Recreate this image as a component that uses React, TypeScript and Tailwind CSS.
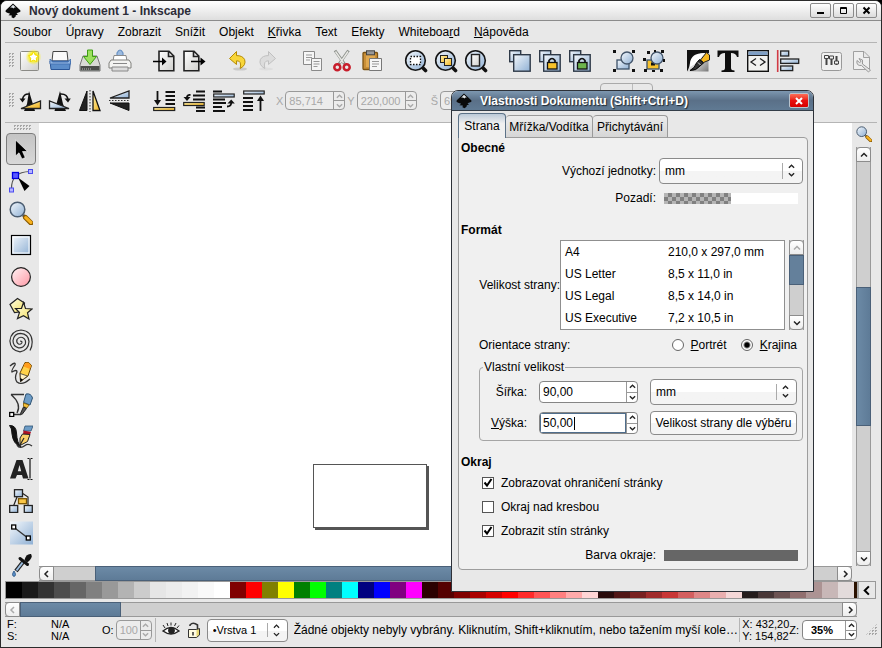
import type { ReactNode } from "react";
import clsx from "clsx";

const Defs = () => (
  <svg width="0" height="0" className="absolute" aria-hidden="true">
    <defs>
      <linearGradient id="blue" x1="0" y1="0" x2="1" y2="1">
        <stop offset="0" stopColor="#f4f8fc" />
        <stop offset="1" stopColor="#8fb0d4" />
      </linearGradient>
      <linearGradient id="pink" x1="0" y1="0" x2="1" y2="1">
        <stop offset="0" stopColor="#fff4f5" />
        <stop offset="1" stopColor="#ff97a4" />
      </linearGradient>
      <linearGradient id="gold" x1="0" y1="0" x2="1" y2="1">
        <stop offset="0" stopColor="#fff3b0" />
        <stop offset="1" stopColor="#f2b21c" />
      </linearGradient>
      <linearGradient id="pale" x1="0" y1="0" x2="1" y2="1">
        <stop offset="0" stopColor="#ffffe8" />
        <stop offset="1" stopColor="#f5e060" />
      </linearGradient>
      <linearGradient id="paper" x1="0" y1="0" x2="1" y2="1">
        <stop offset="0" stopColor="#ffffff" />
        <stop offset="1" stopColor="#cfcfcc" />
      </linearGradient>
      <linearGradient id="ink" x1="0" y1="0" x2="1" y2="1">
        <stop offset="0.3" stopColor="#ffffff" />
        <stop offset="1" stopColor="#777777" />
      </linearGradient>
      <radialGradient id="glow">
        <stop offset="0.4" stopColor="#fff200" />
        <stop offset="1" stopColor="#fff200" stopOpacity="0" />
      </radialGradient>
    </defs>
  </svg>
);

const Svg = ({ children, size = 24 }: { children: ReactNode; size?: number }) => (
  <svg width={size} height={size} viewBox="0 0 24 24" fill="none" aria-hidden="true">
    {children}
  </svg>
);

const Logo = () => (
  <svg width="16" height="16" viewBox="0 0 16 16" aria-hidden="true">
    <path
      d="M8 0.5 L15 7 Q16.5 9 13.5 9.5 L11.5 10.3 L13 11.5 L10.8 12.3 L10.5 13.8 L8.5 15.2 L6.5 14.2 L6.8 12.6 L3.4 12.2 L5.2 10.8 L2.2 9.7 Q-0.5 9 1 7 Z"
      fill="#0a0a0a"
    />
    <path d="M8 1.8 L10.8 4.6 L9.4 4.4 L8.4 5.4 L7 4.4 L5.2 4.7 Z" fill="#dfe5ea" />
  </svg>
);

const Doc = () => (
  <path
    d="M7 2.2 H17 L21.8 7 V21.8 H7 Z M16.5 2.5 V7.5 H21.5"
    fill="url(#paper)"
    stroke="#222"
    strokeWidth="1.6"
  />
);

const Lens = ({ children }: { children?: ReactNode }) => (
  <Svg>
    <path d="M18 18 L21.5 21.5" stroke="#111" strokeWidth="3.6" strokeLinecap="round" />
    <circle cx="11.5" cy="11.5" r="9.8" fill="url(#blue)" stroke="#151515" strokeWidth="1.6" />
    {children}
  </Svg>
);

const Clones = ({ lock }: { lock?: string }) => (
  <Svg>
    <rect x="1.7" y="1.7" width="11" height="11" fill="url(#blue)" stroke="#2e3947" strokeWidth="1.4" />
    <rect x="5.7" y="5.7" width="16.5" height="16.5" fill="url(#blue)" stroke="#2e3947" strokeWidth="1.4" />
    {lock && (
      <>
        <path d="M11 14 V11.5 Q14 7.5 17 11.5 V14" stroke="#111" strokeWidth="1.7" />
        <rect x="9.5" y="13.5" width="9.5" height="6.5" fill={lock} stroke="#111" strokeWidth="1.3" />
      </>
    )}
  </Svg>
);

const GroupShape = ({ locked }: { locked?: boolean }) => (
  <Svg>
    <rect
      x="5"
      y="11"
      width="12"
      height="9"
      fill={locked ? "#f7c22d" : "url(#blue)"}
      stroke="#3b5068"
      strokeWidth="1.3"
    />
    {locked && <path d="M9 13.5 h4 v3 h-4 z" fill="#111" />}
    <circle cx="15" cy="9" r="6" fill="url(#blue)" stroke="#44566b" strokeWidth="1.3" />
    <path
      d={
        locked
          ? "M5 2h3v3h-3z M19 1h3v3h-3z M1 9h3v3h-3z M21 10h2v3h-2z M2 20h3v3h-3z M18 20h3v3h-3z M12 1h2v2h-2z M10 21h3v2h-3z"
          : "M1 1h3v3h-3z M20 1h3v3h-3z M1 20h3v3h-3z M20 20h3v3h-3z"
      }
      fill="#111"
    />
  </Svg>
);

const Magnifier = ({ size }: { size?: number }) => (
  <Svg size={size}>
    <path d="M14 14 L17 17" stroke="#555" strokeWidth="3" />
    <path d="M16.5 16.5 L22 22" stroke="#8a5a00" strokeWidth="5" strokeLinecap="round" />
    <path d="M16.8 16.6 L21.8 21.4" stroke="#f9b21e" strokeWidth="3.2" strokeLinecap="round" />
    <circle cx="8.5" cy="8.5" r="7.3" fill="url(#blue)" stroke="#4a5c70" strokeWidth="1.5" />
  </Svg>
);

type Tool = [string, ReactNode];

const commandGroups: Tool[][] = [
  [
    [
      "Nový",
      <Svg>
        <rect x="2.5" y="2.5" width="18" height="19" rx="1" fill="url(#paper)" stroke="#8a8a86" />
        <circle cx="15.5" cy="8" r="8" fill="url(#glow)" />
        <path
          d="M15.5 2.8 L17.2 6 L20.5 6.6 L18.3 9.2 L18.8 12.6 L15.5 11.2 L12.2 12.6 L12.7 9.2 L10.5 6.6 L13.8 6 Z"
          fill="#fff"
          stroke="#f3dc00"
        />
      </Svg>,
    ],
    [
      "Otevřít",
      <Svg>
        <path d="M4 12 L5 2.5 H19 L20 12 Z" fill="#fafafa" stroke="#444" />
        <path d="M2 12 H22.5 L21.5 20.5 H3 Z" fill="#5b8cc9" stroke="#2a5699" />
        <path d="M2 10 L2 15 H22.5 V10 L20 13 H4.5 Z" fill="#8fb4e2" stroke="#3f6dae" strokeWidth="0.8" />
      </Svg>,
    ],
    [
      "Uložit",
      <Svg>
        <path d="M5 7 H19 L22 16 V22 H2 V16 Z" fill="#d8dad6" stroke="#777" />
        <path d="M2.5 17 H21.5 V21.5 H2.5 Z" fill="#4b4e4c" />
        <path d="M4 20h9" stroke="#bbb" strokeDasharray="1 1" />
        <path d="M9.5 1 H14.5 V7.5 H18.5 L12 15.5 L5.5 7.5 H9.5 Z" fill="#9be05d" stroke="#3f9d14" />
      </Svg>,
    ],
    [
      "Tisk",
      <Svg>
        <path d="M9 7 V4 Q12 -2 15 4 V7" fill="#9cbbe0" stroke="#6a92c4" strokeWidth="1.2" />
        <path d="M6 6.5 H18 L19 12 H5 Z" fill="#fff" stroke="#888" />
        <path d="M3 11 H21 L23 14 V19 H1 V14 Z" fill="#f4f4f2" stroke="#80807c" />
        <path d="M5 14.5 H19" stroke="#888" />
        <path d="M4 18 H20 V22 H4 Z" fill="#ddd" stroke="#888" />
      </Svg>,
    ],
  ],
  [
    [
      "Importovat",
      <Svg>
        <Doc />
        <path d="M1 12.5 H13" stroke="#000" strokeWidth="1.6" />
        <path d="M10 8.5 L14.5 12.5 L10 16.5 Z" fill="#000" />
      </Svg>,
    ],
    [
      "Exportovat",
      <Svg>
        <g transform="translate(-5 0)">
          <Doc />
        </g>
        <path d="M9 12.5 H21" stroke="#000" strokeWidth="1.6" />
        <path d="M18.5 8.5 L23.5 12.5 L18.5 16.5 Z" fill="#000" />
      </Svg>,
    ],
  ],
  [
    [
      "Zpět",
      <Svg>
        <ellipse cx="14" cy="20" rx="7" ry="1.6" fill="#c9c9c9" />
        <path
          d="M10.5 2.5 L3.5 9.5 L10.5 15.5 V11.8 Q16 11.5 14.2 19.5 Q20.5 16 18.6 10.5 Q16.5 6.5 10.5 6.6 Z"
          fill="#f8d63a"
          stroke="#b58b05"
        />
      </Svg>,
    ],
    [
      "Znovu",
      <Svg>
        <ellipse cx="10" cy="20" rx="7" ry="1.4" fill="#dedede" />
        <path
          d="M12.5 2.5 L19.5 9.5 L12.5 15.5 V11.8 Q7 11.5 8.8 19.5 Q2.5 16 4.4 10.5 Q6.5 6.5 12.5 6.6 Z"
          fill="#dcdcdc"
          stroke="#c0c0c0"
        />
      </Svg>,
    ],
  ],
  [
    [
      "Kopírovat",
      <Svg>
        <path d="M3.5 2.5 H14.5 V15.5 H3.5 Z" fill="#f6f6f6" stroke="#8a8a8a" />
        <path d="M6 6h6M6 8.5h6M6 11h4" stroke="#999" />
        <path d="M11.5 9.5 H21.5 V21.5 H11.5 Z" fill="#f6f6f6" stroke="#8a8a8a" />
        <path d="M13.5 12.5h6M13.5 15h6M13.5 17.5h4" stroke="#999" />
      </Svg>,
    ],
    [
      "Vyjmout",
      <Svg>
        <path d="M5 1.5 L14.5 15 M18.5 1.5 L9 15" stroke="#8d918c" strokeWidth="3" />
        <path d="M5.5 2.5 L13.5 14 M18 2.5 L10 14" stroke="#e8e8e4" strokeWidth="1.4" />
        <circle cx="7.3" cy="18.2" r="3" stroke="#c81e2c" strokeWidth="2.5" />
        <circle cx="16.7" cy="18.2" r="3" stroke="#c81e2c" strokeWidth="2.5" />
      </Svg>,
    ],
    [
      "Vložit",
      <Svg>
        <rect x="3" y="3.5" width="14.5" height="17" rx="1" fill="#c98f38" stroke="#7c5313" strokeWidth="1.3" />
        <path d="M6 6 H15 V18 H6 Z" fill="#e0a951" />
        <rect x="6.5" y="1.8" width="8" height="4" fill="#999" stroke="#444" />
        <path d="M9.5 9.5 H21.5 V21.5 H9.5 Z" fill="#f6f6f6" stroke="#777" />
        <path d="M12 12.5h7M12 15h7M12 17.5h5" stroke="#999" />
      </Svg>,
    ],
  ],
  [
    [
      "Přiblížit výběr",
      <Lens>
        <rect x="6.5" y="7.5" width="10" height="8" fill="#fff" stroke="#111" strokeWidth="1.3" strokeDasharray="1.5 1.5" />
      </Lens>,
    ],
    [
      "Přiblížit kresbu",
      <Lens>
        <rect x="6.5" y="6.5" width="7" height="7" fill="url(#gold)" stroke="#222" />
        <rect x="10.5" y="9.5" width="7" height="7" fill="url(#gold)" stroke="#222" />
      </Lens>,
    ],
    [
      "Přiblížit stránku",
      <Lens>
        <rect x="7.5" y="5.5" width="8" height="11.5" fill="url(#paper)" stroke="#222" strokeWidth="1.4" />
      </Lens>,
    ],
  ],
  [
    ["Duplikovat", <Clones />],
    ["Klonovat", <Clones lock="#f8c22a" />],
    ["Odpojit klon", <Clones lock="#6db44c" />],
  ],
  [
    ["Seskupit", <GroupShape />],
    ["Zrušit seskupení", <GroupShape locked />],
  ],
  [
    [
      "Výplň a obrys",
      <Svg>
        <rect x="1.5" y="1.5" width="21" height="21" fill="url(#ink)" />
        <path d="M1 22.5 V1 H23 V4 H18 Q5 4 4 14 Q3 20 1 22.5 Z" fill="#111" />
        <path d="M4 18 Q4 5 19 4 L14 10 L9 15 Z" fill="#fff" />
        <path d="M20.5 3.5 L23.5 6 V11 L17.5 13.5 L14.5 11 Z" fill="#f6b81f" stroke="#222" />
        <path d="M13.5 10.5 L17.5 14 L14 17 Q10 22 4 21.5 Q9 19 10.5 14 Z" fill="#333" stroke="#000" />
        <path d="M12 13.5 L14.5 16" stroke="#ddd" />
      </Svg>,
    ],
    [
      "Text a písmo",
      <Svg>
        <path
          d="M1.5 1.5 H22.5 V8 H21 Q20 4 15 4 V19 Q15 21.5 18.5 21.5 V23 H5.5 V21.5 Q9 21.5 9 19 V4 Q4 4 3 8 H1.5 Z"
          fill="#0d0d0d"
        />
      </Svg>,
    ],
    [
      "XML editor",
      <Svg>
        <rect x="1.7" y="1.7" width="20.6" height="20.6" fill="#f2f2ef" stroke="#111" strokeWidth="1.4" />
        <rect x="2.5" y="2.5" width="19" height="3.5" fill="#7f9fc4" />
        <path d="M2 6.5 H22" stroke="#222" />
        <path d="M10 9.5 L5 13 L10 16.5 M14 9.5 L19 13 L14 16.5" stroke="#222" strokeWidth="1.3" />
      </Svg>,
    ],
    [
      "Zarovnat",
      <Svg>
        <path d="M1.7 1 V23" stroke="#d13a45" strokeWidth="1.6" />
        <rect x="4.7" y="2" width="8" height="5" fill="url(#blue)" stroke="#222" strokeWidth="1.3" />
        <rect x="4.7" y="10" width="18" height="4.4" fill="url(#blue)" stroke="#222" strokeWidth="1.3" />
        <rect x="4.7" y="17" width="12" height="4.6" fill="url(#blue)" stroke="#222" strokeWidth="1.3" />
      </Svg>,
    ],
  ],
  [
    [
      "Nastavení",
      <Svg>
        <rect x="1.5" y="3.5" width="20" height="18" rx="2" fill="#f0f0f0" stroke="#999" />
        <path d="M6.5 7v9M11.5 7v9M16.5 7v9" stroke="#444" strokeWidth="2" />
        <path d="M4.5 6.5h4v3h-4z M9.5 7h4v3h-4z M14.5 12h4v3h-4z" fill="#f0f0f0" stroke="#444" />
      </Svg>,
    ],
    [
      "Vlastnosti dokumentu",
      <Svg>
        <path d="M3.5 2.5 H14 L19.5 8 V20.5 H3.5 Z M13.5 2.5 V8.5 H19" fill="#efefef" stroke="#a0a0a0" />
        <path
          d="M9 9.5 L12.5 11 V15 L20.5 21 L18.5 23 L11.5 16.5 Q6 17 7 11.5 L9.5 13.5 L11 12.5 Z"
          fill="#e6e6e6"
          stroke="#999"
        />
      </Svg>,
    ],
  ],
];

const transformGroups: Tool[][] = [
  [
    [
      "Otočit doleva",
      <Svg>
        <path d="M11 2 L17 22 H6 L9 15 Z" fill="#111" />
        <path d="M3 19.5 L22.5 12 V19.5 Z" fill="url(#gold)" stroke="#222" strokeWidth="1.3" />
        <path d="M11.5 5 Q5 4.5 4.5 11" stroke="#111" strokeWidth="1.6" />
        <path d="M1.5 9.5 H7.5 L4.5 13.5 Z" fill="#111" />
      </Svg>,
    ],
    [
      "Otočit doprava",
      <Svg>
        <path d="M12 2 L6.5 22 H18 L15 15 Z" fill="#111" />
        <path d="M21 19.5 L1.5 12 V19.5 Z" fill="url(#blue)" stroke="#222" strokeWidth="1.3" />
        <path d="M12 5 Q19.5 4.5 20 11" stroke="#111" strokeWidth="1.6" />
        <path d="M16.5 9.5 H22.8 L20 13.5 Z" fill="#111" />
      </Svg>,
    ],
    [
      "Překlopit vodorovně",
      <Svg>
        <path d="M9 2 V21.5 H1.5 Z" fill="#222" stroke="#111" />
        <path d="M15 2 V21.5 H22 Z" fill="url(#gold)" stroke="#111" strokeWidth="1.3" />
        <path d="M12 1 V23" stroke="#333" strokeDasharray="1.5 1.5" />
      </Svg>,
    ],
    [
      "Překlopit svisle",
      <Svg>
        <path d="M21 2 V9 H2 Z" fill="url(#blue)" stroke="#222" strokeWidth="1.3" />
        <path d="M21 21.5 V14 H2 Z" fill="#222" stroke="#111" />
        <path d="M1 11.5 H22" stroke="#333" strokeDasharray="1.5 1.5" />
      </Svg>,
    ],
  ],
  [
    [
      "Dospod",
      <Svg>
        <path d="M13.5 3h9.5M13.5 7h9.5M13.5 11h9.5M13.5 15h9.5" stroke="#111" strokeWidth="2" />
        <rect x="1.7" y="18.5" width="21" height="3" fill="url(#gold)" stroke="#222" strokeWidth="1.2" />
        <path d="M5.5 2 V13" stroke="#111" strokeWidth="1.8" />
        <path d="M2 11 H9 L5.5 16.5 Z" fill="#111" />
      </Svg>,
    ],
    [
      "O krok níž",
      <Svg>
        <path d="M14 2.5h9M11 6.5h12M11 10.5h12M14 18.5h9M14 22h9" stroke="#111" strokeWidth="2" />
        <rect x="1.7" y="13.5" width="20.5" height="3" fill="url(#gold)" stroke="#222" strokeWidth="1.2" />
        <path d="M8.5 6 Q5 5.5 4.8 9" stroke="#111" strokeWidth="1.8" />
        <path d="M1.5 8 H8.5 L5 12 Z" fill="#111" />
      </Svg>,
    ],
    [
      "O krok výš",
      <Svg>
        <path d="M1 2.5h9M1 10.5h12M1 14h13M1 18h9M1 22h12" stroke="#111" strokeWidth="2" />
        <rect x="1.7" y="5" width="20.5" height="3" fill="url(#blue)" stroke="#222" strokeWidth="1.2" />
        <path d="M15 17.5 Q19 17.5 19.2 14" stroke="#111" strokeWidth="1.8" />
        <path d="M15.5 14.5 H22.8 L19.2 10.5 Z" fill="#111" />
      </Svg>,
    ],
    [
      "Navrch",
      <Svg>
        <path d="M1 9h10M1 13h10M1 17h10M1 21h10" stroke="#111" strokeWidth="2" />
        <rect x="1.7" y="2" width="20.5" height="3" fill="url(#blue)" stroke="#222" strokeWidth="1.2" />
        <path d="M18.5 22 V10" stroke="#111" strokeWidth="1.8" />
        <path d="M15 12 H22 L18.5 6.5 Z" fill="#111" />
      </Svg>,
    ],
  ],
];

const toolbox: Tool[] = [
  [
    "Výběr",
    <Svg>
      <path d="M6.5 3 V19 L10 15.8 L13 22 L16.2 20.5 L13.5 14.5 H18.5 Z" fill="#000" stroke="#fff" strokeWidth="0.6" />
    </Svg>,
  ],
  [
    "Uzly",
    <Svg>
      <path d="M2.5 20 Q2 3 21 2.5" stroke="#555" strokeWidth="1.2" />
      <rect x="3.5" y="3.5" width="6" height="6" fill="#5a5aff" stroke="#0000e0" strokeWidth="1.3" />
      <rect x="19.5" y="0.5" width="4" height="4" fill="#b4b4ff" stroke="#4a4af0" />
      <rect x="0.5" y="19" width="4" height="4" fill="#b4b4ff" stroke="#4a4af0" />
      <path d="M9 8.5 L20.5 17 L15.5 22 Z" fill="#000" />
    </Svg>,
  ],
  ["Lupa", <Magnifier />],
  [
    "Obdélník",
    <Svg>
      <rect x="2.5" y="2.5" width="19" height="19" fill="url(#blue)" stroke="#000" strokeWidth="1.2" />
      <rect x="4" y="4" width="16" height="16" stroke="#fff" />
    </Svg>,
  ],
  [
    "Elipsa",
    <Svg>
      <circle cx="12" cy="12" r="9.4" fill="url(#pink)" stroke="#222" strokeWidth="1.2" />
    </Svg>,
  ],
  [
    "Hvězda",
    <Svg>
      <path d="M8.5 1.5 L15.5 6 L14 14.5 L5.5 15.5 L1 7.5 Z" fill="url(#pale)" stroke="#222" strokeWidth="1.2" />
      <path
        d="M14.5 5.5 L16.5 11.5 L23 12 L18.5 15.8 L20 22 L14.5 18.7 L8.5 21.5 L10.5 15.5 L6.5 11.5 L12.5 11.3 Z"
        fill="url(#pale)"
        stroke="#222"
        strokeWidth="1.2"
      />
    </Svg>,
  ],
  [
    "Spirála",
    <Svg>
      <path
        d="M11 12 Q13.5 12 12.8 14 Q11.5 15.8 9.5 15 Q7 13.5 8 10.5 Q10 7.5 13.5 8.5 Q17.5 10.5 16.3 15 Q14 19.3 9.5 18.8 Q4 17.5 4 11.5 Q5 4.5 11.5 4.3 Q19.5 4.8 20 12.5 Q19.5 21.5 11 22.8 Q1.5 21.5 0.9 12 Q1.8 1.8 12 1 Q23 2 23.2 13 Q23.2 17.5 21 21.5"
        stroke="#333"
        strokeWidth="1.2"
      />
    </Svg>,
  ],
  [
    "Tužka",
    <Svg>
      <path d="M1 5 Q7 0 6 4 Q2 10 3 11 Q8 8 8 11 Q5 17 8 21 Q13 25 21 18" stroke="#333" strokeWidth="1.3" />
      <path d="M16 1.5 Q20 0 22.5 4.5 L19 15 L11.5 20.5 L11 12 Z" fill="#ffd24a" stroke="#6b4500" />
      <path d="M16 2 Q20 0.5 22 4.5 L21 8 L14.5 5.5 Z" fill="#ff9d1c" />
      <path d="M11.2 12.5 L18.5 15 L11.5 20.5 Z" fill="#fff0c0" stroke="#333" strokeWidth="0.8" />
      <path d="M11.2 17 L14 18.5 L11.5 21 Z" fill="#000" />
    </Svg>,
  ],
  [
    "Pero",
    <Svg>
      <path d="M2 1.5 H15 M2 1.5 Q13 11 8 20 M4 21.5 H12" stroke="#333" strokeWidth="1.3" />
      <rect x="0.7" y="19.5" width="4" height="4" fill="#fff" stroke="#000" strokeWidth="1.3" />
      <path d="M17 1 Q22 0 23.5 5 L21 12 L14.5 9.5 Z" fill="#6d9cc6" stroke="#2f5373" />
      <path d="M14.5 10 L20 12 L18 15 L14.5 13.5 Z" fill="#f7c23a" stroke="#7a5500" strokeWidth="0.8" />
      <path d="M14.5 14 L17.5 15.5 L13 21.5 L11.5 20.5 Z" fill="#555" stroke="#222" />
    </Svg>,
  ],
  [
    "Kaligrafie",
    <Svg>
      <path d="M0.5 0.5 Q7 0 7.5 8 Q8 18 12 22 Q4 19 3 9 Q3 3 0.5 0.5 Z" fill="#111" stroke="#111" />
      <path d="M8 20 Q11 24.5 16 20.5 Q19 18 23 21" stroke="#333" strokeWidth="1.4" />
      <path d="M16 1 H24 L22 6 H14.5 Z" fill="#6d9cc6" stroke="#2f5373" strokeWidth="0.8" />
      <path d="M14.5 5.5 L22 7 L21 9.5 H14 Z" fill="#b01124" />
      <path d="M13.5 9 L21 9.5 L18.5 16.5 L11 20.5 L11 13 Z" fill="#fbd068" stroke="#222" />
      <path d="M11 20 L15 13" stroke="#222" strokeWidth="1.2" />
    </Svg>,
  ],
  [
    "Text",
    <Svg>
      <path
        d="M7.5 3 H13.5 L19.5 21.5 H14 L13 18 H8 L6.5 21.5 H1 Z M10.5 8 L8.8 14.3 H12.2 Z"
        fill="#222"
        fillRule="evenodd"
      />
      <path d="M18.5 1.5 H20.5 M21.5 1.5 H23.5 M21 2 V21.5 M18.5 22.5 H20.5 M21.5 22.5 H23.5" stroke="#111" strokeWidth="1.2" />
    </Svg>,
  ],
  [
    "Konektor",
    <Svg>
      <path d="M8 8 L4.5 17 M13 4 L19 8 V17" stroke="#222" strokeWidth="1.2" />
      <rect x="5.5" y="0.7" width="8" height="7" fill="url(#blue)" stroke="#222" strokeWidth="1.3" />
      <rect x="0.7" y="16.5" width="8" height="7" fill="url(#blue)" stroke="#222" strokeWidth="1.3" />
      <rect x="15.3" y="16.5" width="8" height="7" fill="url(#blue)" stroke="#222" strokeWidth="1.3" />
      <rect x="9.5" y="9.7" width="8" height="5" fill="#f9c648" stroke="#7a5500" strokeWidth="1.3" />
    </Svg>,
  ],
  [
    "Přechod",
    <Svg>
      <rect x="1" y="0.5" width="23" height="23" fill="url(#blue)" />
      <path d="M4.5 6 L19.5 17.5" stroke="#333" strokeWidth="1.3" />
      <rect x="2.7" y="4" width="4" height="4" fill="#fff" stroke="#000" strokeWidth="1.3" />
      <rect x="17.3" y="15" width="4" height="4" fill="#fff" stroke="#000" strokeWidth="1.3" />
    </Svg>,
  ],
  [
    "Kapátko",
    <Svg>
      <path d="M14 9 L7 18" stroke="#222" strokeWidth="4.2" />
      <path d="M14 9 L7.5 17.5" stroke="#9dbfe2" strokeWidth="2" />
      <path d="M11 5.5 L18.5 11.5" stroke="#111" strokeWidth="3" strokeLinecap="round" />
      <path d="M15.5 7 Q17 0.5 22 1 Q24.5 5 18 9.5 Z" fill="#111" />
      <path d="M5 18 Q8 22.5 5 23.5 Q2 22.5 5 18 Z" fill="#5b8fc9" stroke="#24507e" strokeWidth="0.8" />
    </Svg>,
  ],
];

const menu: [string, string, string][] = [
  ["Soubor", "", ""],
  ["Úpravy", "", ""],
  ["Zobrazit", "", ""],
  ["Snížit", "", ""],
  ["Objekt", "", ""],
  ["", "K", "řivka"],
  ["Text", "", ""],
  ["Efekty", "", ""],
  ["Whiteboa", "r", "d"],
  ["", "N", "ápověda"],
];

const palette = [
  "#000000", "#1a1a1a", "#333333", "#4d4d4d", "#666666", "#808080", "#999999", "#b3b3b3", "#cccccc",
  "#e6e6e6", "#ececec", "#f2f2f2", "#f9f9f9", "#ffffff", "#800000", "#ff0000", "#808000", "#ffff00",
  "#008000", "#00ff00", "#008080", "#00ffff", "#000080", "#0000ff", "#800080", "#ff00ff", "#2b0000",
  "#550000", "#800000", "#aa0000", "#d40000", "#ff0000", "#ff2a2a", "#ff5555", "#ff8080", "#ffaaaa",
  "#ffd5d5", "#280b0b", "#501616", "#782121", "#a02c2c", "#c83737", "#d35f5f", "#de8787", "#e9afaf",
  "#f4d7d7", "#241c1c", "#483737", "#6c5353", "#916f6f", "#ac9393", "#c8b7b7", "#e3dbdb", "#2b1100",
];

const pageSizes = [
  ["A4", "210,0 x 297,0 mm"],
  ["US Letter", "8,5 x 11,0 in"],
  ["US Legal", "8,5 x 14,0 in"],
  ["US Executive", "7,2 x 10,5 in"],
];

const chevrons = {
  left: "M5 1 L2 4 L5 7",
  right: "M3 1 L6 4 L3 7",
  up: "M1 5.5 L4 2.5 L7 5.5",
  down: "M1 2.5 L4 5.5 L7 2.5",
};

const Chevron = ({ dir, size = 8 }: { dir: keyof typeof chevrons; size?: number }) => (
  <svg width={size} height={size} viewBox="0 0 8 8" fill="none" aria-hidden="true">
    <path d={chevrons[dir]} stroke="currentColor" strokeWidth="1.5" />
  </svg>
);

const ScrollButton = ({
  dir,
  className,
  disabled,
}: {
  dir: keyof typeof chevrons;
  className?: string;
  disabled?: boolean;
}) => (
  <button
    aria-label={dir}
    disabled={disabled}
    className={clsx(
      "flex h-[15px] w-[15px] shrink-0 items-center justify-center border border-[#8c8c8c] bg-gradient-to-b from-white to-[#ededed] text-[#222] disabled:text-[#aaa]",
      className
    )}
  >
    <Chevron dir={dir} />
  </button>
);

const Handle = ({ className }: { className: string }) => (
  <span
    className={clsx(
      "bg-[conic-gradient(#a6a6a6_25%,transparent_0)] bg-[size:3px_3px]",
      className
    )}
  />
);

const ToolGroups = ({ groups }: { groups: Tool[][] }) => (
  <>
    {groups.map((group, i) => (
      <div key={i} className="flex">
        {group.map(([name, icon]) => (
          <button key={name} aria-label={name} className="flex h-8 w-[30px] items-center justify-center">
            {icon}
          </button>
        ))}
      </div>
    ))}
  </>
);

const Spin = ({
  id,
  value,
  className,
  disabled,
  focused,
  label,
}: {
  id?: string;
  value: string;
  className: string;
  disabled?: boolean;
  focused?: boolean;
  label?: string;
}) => (
  <div
    className={clsx(
      "relative flex overflow-hidden rounded-[4px] border",
      disabled ? "border-[#999] bg-[#ececec] text-[#a8a8a8]" : "border-[#858585] bg-white text-[#222]",
      className
    )}
  >
    <input
      id={id}
      aria-label={label}
      defaultValue={value}
      disabled={disabled}
      className={clsx(
        "w-full min-w-0 flex-1 bg-transparent pl-[3px] outline-none",
        !disabled && "text-black",
        focused && "shadow-[inset_0_0_0_1px_#4f6d8b]"
      )}
    />
    {focused && <span className="absolute top-1 left-[34px] h-[13px] w-px bg-black" />}
    <div className="flex w-[11px] shrink-0 flex-col border-l border-[#999]">
      <button aria-label="Zvýšit" disabled={disabled} className="flex flex-1 items-center justify-center border-b border-[#999]">
        <Chevron dir="up" size={7} />
      </button>
      <button aria-label="Snížit" disabled={disabled} className="flex flex-1 items-center justify-center">
        <Chevron dir="down" size={7} />
      </button>
    </div>
  </div>
);

const Combo = ({
  id,
  label,
  value,
  className,
}: {
  id?: string;
  label?: string;
  value: string;
  className: string;
}) => (
  <div
    className={clsx(
      "grid items-center rounded-[4px] border border-[#8a8a8a] bg-gradient-to-b from-white from-50% to-[#f4f4f4] to-50%",
      className
    )}
  >
    <select id={id} aria-label={label} className="col-start-1 row-start-1 h-full w-full appearance-none bg-transparent pl-[5px] outline-none">
      <option>{value}</option>
    </select>
    <span className="pointer-events-none col-start-1 row-start-1 mr-[7px] flex h-[70%] w-[13px] flex-col items-end justify-center gap-px justify-self-end border-l border-[#aaa] text-[#222]">
      <Chevron dir="up" size={7} />
      <Chevron dir="down" size={7} />
    </span>
  </div>
);

const Check = ({ label, checked }: { label: string; checked?: boolean }) => (
  <label className="ml-[23px] flex h-6 items-center gap-[7px]">
    <span className="grid">
      <input
        type="checkbox"
        defaultChecked={checked}
        className="peer col-start-1 row-start-1 h-3 w-3 appearance-none border border-[#555] bg-white"
      />
      <svg viewBox="0 0 12 12" className="pointer-events-none col-start-1 row-start-1 hidden h-3 w-3 peer-checked:block" fill="none">
        <path d="M2.5 5.5 L5 8.5 L9.5 2" stroke="#000" strokeWidth="2" />
      </svg>
    </span>
    {label}
  </label>
);

const Radio = ({ letter, rest, checked }: { letter: string; rest: string; checked?: boolean }) => (
  <label className="flex items-center gap-[7px]">
    <input
      type="radio"
      name="orientation"
      defaultChecked={checked}
      className="h-3 w-3 appearance-none rounded-full border border-[#666] bg-white checked:bg-[radial-gradient(circle,#000_2px,#fff_4px)]"
    />
    <span>
      <u>{letter}</u>
      {rest}
    </span>
  </label>
);

const DocumentProperties = () => (
  <section
    role="dialog"
    aria-labelledby="dialog-title"
    className="absolute top-[89px] right-[67px] w-[363px] overflow-hidden rounded-t-[7px] border border-[#2d3138] bg-[#e8e8e8]"
  >
    <header className="flex h-5 items-center border-b border-[#333d48] bg-gradient-to-b from-[#7d97b0] via-[#5a7088] to-[#607a93] px-1">
      <Logo />
      <h2 id="dialog-title" className="ml-2 flex-1 font-bold text-white [text-shadow:1px_1px_1px_#1d2731]">
        Vlastnosti Dokumentu (Shift+Ctrl+D)
      </h2>
      <button
        aria-label="Zavřít"
        className="flex h-[15px] w-5 items-center justify-center rounded-[2px] border border-[#b9c3cc] bg-gradient-to-b from-[#ff6b55] via-[#e80f0f] to-[#d80000]"
      >
        <svg width="8" height="8" viewBox="0 0 8 8">
          <path d="M1 1 L7 7 M7 1 L1 7" stroke="#fff" strokeWidth="2" />
        </svg>
      </button>
    </header>

    <div className="pr-[5px] pb-[21px] pl-[6px]">
      <div role="tablist" className="flex items-end pt-[2px]">
        <button
          role="tab"
          aria-selected="true"
          className="relative -mb-px h-[25px] w-12 rounded-t-[4px] border border-b-0 border-[#5c7287] bg-gradient-to-b from-[#bccad8] to-[#f0f0f0] to-40%"
        >
          Strana
        </button>
        <button role="tab" aria-selected="false" className="h-[22px] w-[87px] rounded-t-[4px] border border-b-0 border-l-0 border-[#9a9a9a] bg-gradient-to-b from-[#ececec] to-[#d6d6d6]">
          Mřížka/Vodítka
        </button>
        <button role="tab" aria-selected="false" className="h-[22px] w-[75px] rounded-t-[4px] border border-b-0 border-l-0 border-[#9a9a9a] bg-gradient-to-b from-[#ececec] to-[#d6d6d6]">
          Přichytávání
        </button>
      </div>

      <div role="tabpanel" className="rounded-b-[4px] rounded-tr-[4px] border border-[#9d9d9d] bg-[#f0f0f0] pr-1 pb-[2px]">
        <h3 className="h-5 pl-[2px] leading-5 font-bold">Obecné</h3>
        <div className="flex items-center">
          <label htmlFor="units" className="flex-1 pr-[3px] text-right">
            Výchozí jednotky:
          </label>
          <Combo id="units" value="mm" className="h-[26px] w-36" />
        </div>
        <div className="flex h-7 items-center">
          <label htmlFor="background" className="flex-1 pr-2 text-right">
            Pozadí:
          </label>
          <button id="background" className="mr-[5px] flex h-[11px] w-[134px] bg-white">
            <span className="h-full w-1/2 bg-[conic-gradient(#808080_25%,#b5b5b5_0_50%,#808080_0_75%,#b5b5b5_0)] bg-[size:8px_8px]" />
          </button>
        </div>

        <h3 className="mt-2 h-5 pl-[2px] leading-5 font-bold">Formát</h3>
        <div className="flex items-center">
          <span id="size-label" className="flex-1 text-right whitespace-nowrap">
            Velikost strany:
          </span>
          <div className="w-[225px] border border-[#8f8f8f] bg-white">
            <table aria-labelledby="size-label" className="w-full table-fixed">
              <tbody>
                {pageSizes.map(([name, dims]) => (
                  <tr key={name} className="h-[22px]">
                    <td className="w-[107px] p-0 pl-1">{name}</td>
                    <td className="p-0">{dims}</td>
                  </tr>
                ))}
              </tbody>
            </table>
          </div>
          <div className="mr-[-1px] ml-1 flex h-[90px] flex-col border-x border-[#999] bg-[#cfcfcf]">
            <ScrollButton dir="up" disabled className="-mx-px rounded-t-[4px]" />
            <span className="-mx-px h-[30px] border border-[#4a6078] bg-[#64809b]" />
            <ScrollButton dir="down" className="-mx-px mt-auto rounded-b-[4px]" />
          </div>
        </div>
        <div className="flex h-[30px] items-center pr-[6px] pl-5">
          <span className="flex-1">Orientace strany:</span>
          <div className="flex gap-[14px]">
            <Radio letter="P" rest="ortrét" />
            <Radio letter="K" rest="rajina" checked />
          </div>
        </div>

        <fieldset className="ml-5 rounded-[4px] border border-[#a5a5a5] pr-[5px] pb-[5px]">
          <legend className="ml-[3px] h-[14px] px-px leading-[14px]">Vlastní velikost</legend>
          <div className="mt-[5px] flex items-center">
            <label htmlFor="width" className="flex-1 pr-3 text-right">
              Šířka:
            </label>
            <Spin id="width" value="90,00" className="h-[22px] w-[99px]" />
            <Combo label="Jednotky" value="mm" className="ml-3 h-[26px] w-[147px]" />
          </div>
          <div className="mt-[6px] flex items-center">
            <label htmlFor="height" className="flex-1 pr-3 text-right">
              <u>V</u>ýška:
            </label>
            <Spin id="height" value="50,00" focused className="h-[22px] w-[99px]" />
            <button className="ml-3 h-6 w-[147px] rounded-[4px] border border-[#8a8a8a] bg-gradient-to-b from-white from-50% to-[#f4f4f4] to-50% whitespace-nowrap">
              Velikost strany dle výběru
            </button>
          </div>
        </fieldset>

        <h3 className="mt-3 h-[18px] pl-[2px] leading-[18px] font-bold">Okraj</h3>
        <Check label="Zobrazovat ohraničení stránky" checked />
        <Check label="Okraj nad kresbou" />
        <Check label="Zobrazit stín stránky" checked />
        <div className="flex h-6 items-center">
          <label htmlFor="border-color" className="flex-1 pr-2 text-right">
            Barva okraje:
          </label>
          <button id="border-color" className="mr-[5px] h-[11px] w-[134px] bg-[#666]" />
        </div>
      </div>
    </div>
  </section>
);

const windowButton =
  "flex h-[15px] w-[21px] items-center justify-center rounded-[2px] border border-[#8a8a8a] bg-gradient-to-b from-white to-[#dcdcdc]";

export default function App() {
  return (
    <div className="bg-black font-['Liberation_Sans',Arial,sans-serif] text-[12px] leading-[14px] text-black">
      <Defs />
      <div className="relative flex min-h-screen flex-col overflow-hidden rounded-t-[7px] border border-[#2b2b2b] bg-[#e8e8e8]">
        <header className="flex h-5 shrink-0 items-center border-b border-[#8b8b8b] bg-gradient-to-b from-white to-[#dedede] px-1">
          <Logo />
          <h1 className="ml-2 flex-1 font-bold text-[#2c2c38]">Nový dokument 1 - Inkscape</h1>
          <div className="flex gap-[2px]">
            <button aria-label="Minimalizovat" className={windowButton}>
              <svg width="9" height="9"><path d="M1 7h7" stroke="#000" strokeWidth="2" /></svg>
            </button>
            <button aria-label="Maximalizovat" className={windowButton}>
              <svg width="9" height="9"><path d="M1.5 1.5h6v6h-6z M1 2.5h7" stroke="#000" fill="none" /></svg>
            </button>
            <button aria-label="Zavřít" className={windowButton}>
              <svg width="9" height="9"><path d="M1.5 1.5l6 6M7.5 1.5l-6 6" stroke="#000" strokeWidth="2" /></svg>
            </button>
          </div>
        </header>

        <nav className="mx-1 flex h-[22px] shrink-0 items-center gap-[14px] border-b border-[#b5b5b5] pl-2">
          {menu.map(([before, key, after]) => (
            <button key={before + key}>
              {before}
              {key && <u>{key}</u>}
              {after}
            </button>
          ))}
        </nav>

        <div role="toolbar" className="mx-1 flex h-9 shrink-0 items-center border-b border-[#b5b5b5]">
          <Handle className="ml-[3px] h-[15px] w-[6px]" />
          <div className="flex gap-[14px] pl-px">
            <ToolGroups groups={commandGroups} />
          </div>
        </div>

        <div role="toolbar" className="mx-1 flex h-11 shrink-0 items-center border-b border-[#b5b5b5]">
          <Handle className="ml-[3px] h-[15px] w-[6px]" />
          <div className="flex gap-[14px] pl-px">
            <ToolGroups groups={transformGroups} />
          </div>
          <div className="ml-[7px] flex items-center gap-[2px] text-[11px] text-[#a8a8a8]">
            <label htmlFor="pos-x">X</label>
            <Spin id="pos-x" value="85,714" disabled className="h-[19px] w-[60px]" />
            <label htmlFor="pos-y">Y</label>
            <Spin id="pos-y" value="220,000" disabled className="h-[19px] w-[60px]" />
            <label htmlFor="size-w" className="ml-3">Š</label>
            <Spin id="size-w" value="69,000" disabled className="h-[19px] w-[60px]" />
          </div>
          <div className="ml-[100px] flex h-9 w-[53px] rounded-[4px] border border-[#aaa]">
            <span className="w-8 border-r border-[#bbb]" />
          </div>
        </div>

        <main className="flex flex-1">
          <div role="toolbar" className="flex w-[38px] shrink-0 flex-col items-start pt-[2px] pl-[5px]">
            <Handle className="mb-[2px] ml-[7px] h-[6px] w-[18px]" />
            {toolbox.map(([name, icon], i) => (
              <button
                key={name}
                aria-label={name}
                className={clsx(
                  "flex h-8 w-[30px] items-center justify-center",
                  i === 0 && "rounded-[4px] border border-[#7d7d7d] bg-gradient-to-b from-[#c4c4c4] to-[#d8d8d8]"
                )}
              >
                {icon}
              </button>
            ))}
          </div>
          <div className="flex min-w-0 flex-1 flex-col">
            <div className="relative flex-1 bg-white">
              <div className="absolute top-[341px] left-[274px] h-16 w-[114px] border border-[#555] bg-white shadow-[2px_2px_0_#555]" />
            </div>
            <div className="flex h-[15px] border-y border-[#999] bg-[#cfcfcf]">
              <ScrollButton dir="left" className="-my-px rounded-l-[4px]" />
              <span className="-my-px ml-[41px] w-[500px] border border-[#4a6078] bg-gradient-to-b from-[#6c8aa6] to-[#5e7b97]" />
              <ScrollButton dir="right" className="-my-px ml-auto rounded-r-[4px]" />
            </div>
          </div>
          <div className="flex w-[29px] shrink-0 flex-col items-center pt-[3px] pr-[6px] pb-[15px]">
            <button aria-label="Přiblížit při změně okna" className="mb-[5px]">
              <Magnifier size={16} />
            </button>
            <div className="flex flex-1 flex-col border-x border-[#999] bg-[#cfcfcf]">
              <ScrollButton dir="up" className="-mx-px rounded-t-[4px]" />
              <span className="-mx-px mt-[125px] h-[139px] border border-[#4a6078] bg-gradient-to-r from-[#6c8aa6] to-[#5e7b97]" />
              <ScrollButton dir="down" className="-mx-px mt-auto rounded-b-[4px]" />
            </div>
          </div>
        </main>

        <div className="mr-[5px] ml-1 flex h-[18px] shrink-0 border border-[#999]">
          <div className="flex min-w-0 flex-1 overflow-hidden">
            {palette.map((color, i) => (
              <button key={i} aria-label={color} className="w-4 shrink-0" style={{ backgroundColor: color }} />
            ))}
          </div>
          <button aria-label="Nabídka palety" className="flex w-[18px] items-center justify-center border-l-2 border-[#aaa]">
            <Chevron dir="left" size={11} />
          </button>
        </div>

        <div className="mt-[3px] mr-6 ml-1 flex h-[15px] shrink-0 border-y border-[#999] bg-[#cfcfcf]">
          <ScrollButton dir="left" disabled className="-my-px rounded-l-[4px]" />
          <span className="-my-px w-[101px] border border-[#4a6078] bg-gradient-to-b from-[#6c8aa6] to-[#5e7b97]" />
          <ScrollButton dir="right" className="-my-px ml-auto rounded-r-[4px]" />
        </div>

        <footer className="flex h-[30px] shrink-0 items-center pr-1 pb-1 pl-[6px] text-[11px] leading-[12px]">
          <dl className="grid w-[95px] grid-cols-[44px_1fr]">
            <dt>F:</dt>
            <dd>N/A</dd>
            <dt>S:</dt>
            <dd>N/A</dd>
          </dl>
          <label htmlFor="opacity">O:</label>
          <Spin id="opacity" value="100" disabled className="ml-[2px] h-5 w-9" />
          <span className="mr-[6px] ml-[3px] h-6 w-px bg-[#b5b5b5]" />
          <button aria-label="Viditelnost vrstvy">
            <svg width="18" height="18" viewBox="0 0 18 18" fill="none">
              <path d="M1 10 Q9 3 17 10 Q9 16 1 10 Z" fill="#fff" stroke="#222" strokeWidth="1.4" />
              <circle cx="9.5" cy="9.5" r="3.4" fill="#222" />
              <path d="M3 7 L1 4 M6 5 L5 2 M9 4.5 V1.5 M12.5 5 L14 2 M15 7 L17 4.5" stroke="#222" />
            </svg>
          </button>
          <button aria-label="Zámek vrstvy" className="mr-[5px] ml-[6px]">
            <svg width="16" height="18" viewBox="0 0 16 18" fill="none">
              <path d="M4 5 V4 Q7 0.5 11.5 4 V8" stroke="#333" strokeWidth="1.6" />
              <path d="M2.5 8.5 L10.5 8.5 L13.5 7.5 V14 L10.5 16.5 H2.5 Z" fill="#e8d977" stroke="#333" />
              <rect x="3" y="9" width="7.5" height="7" fill="#fffbe0" />
              <path d="M7 11 V14.5" stroke="#222" strokeWidth="1.4" />
            </svg>
          </button>
          <Combo label="Vrstva" value="•Vrstva 1" className="h-[23px] w-[81px]" />
          <p className="ml-[6px] min-w-0 flex-1 truncate text-[12px] leading-[16px]">
            Žádné objekty nebyly vybrány. Kliknutím, Shift+kliknutím, nebo tažením myší kole…
          </p>
          <span className="mr-[2px] h-6 w-px bg-[#b5b5b5]" />
          <div className="w-[47px] whitespace-nowrap">
            <div>X: 432,20</div>
            <div>Y: 154,82</div>
          </div>
          <label htmlFor="zoom">Z:</label>
          <div className="ml-[3px] font-bold">
            <Spin id="zoom" value="35%" className="h-5 w-[55px] pl-[5px]" />
          </div>
          <Handle className="ml-2 h-3 w-3 [clip-path:polygon(100%_0,100%_100%,0_100%)]" />
        </footer>

        <DocumentProperties />
      </div>
    </div>
  );
}
